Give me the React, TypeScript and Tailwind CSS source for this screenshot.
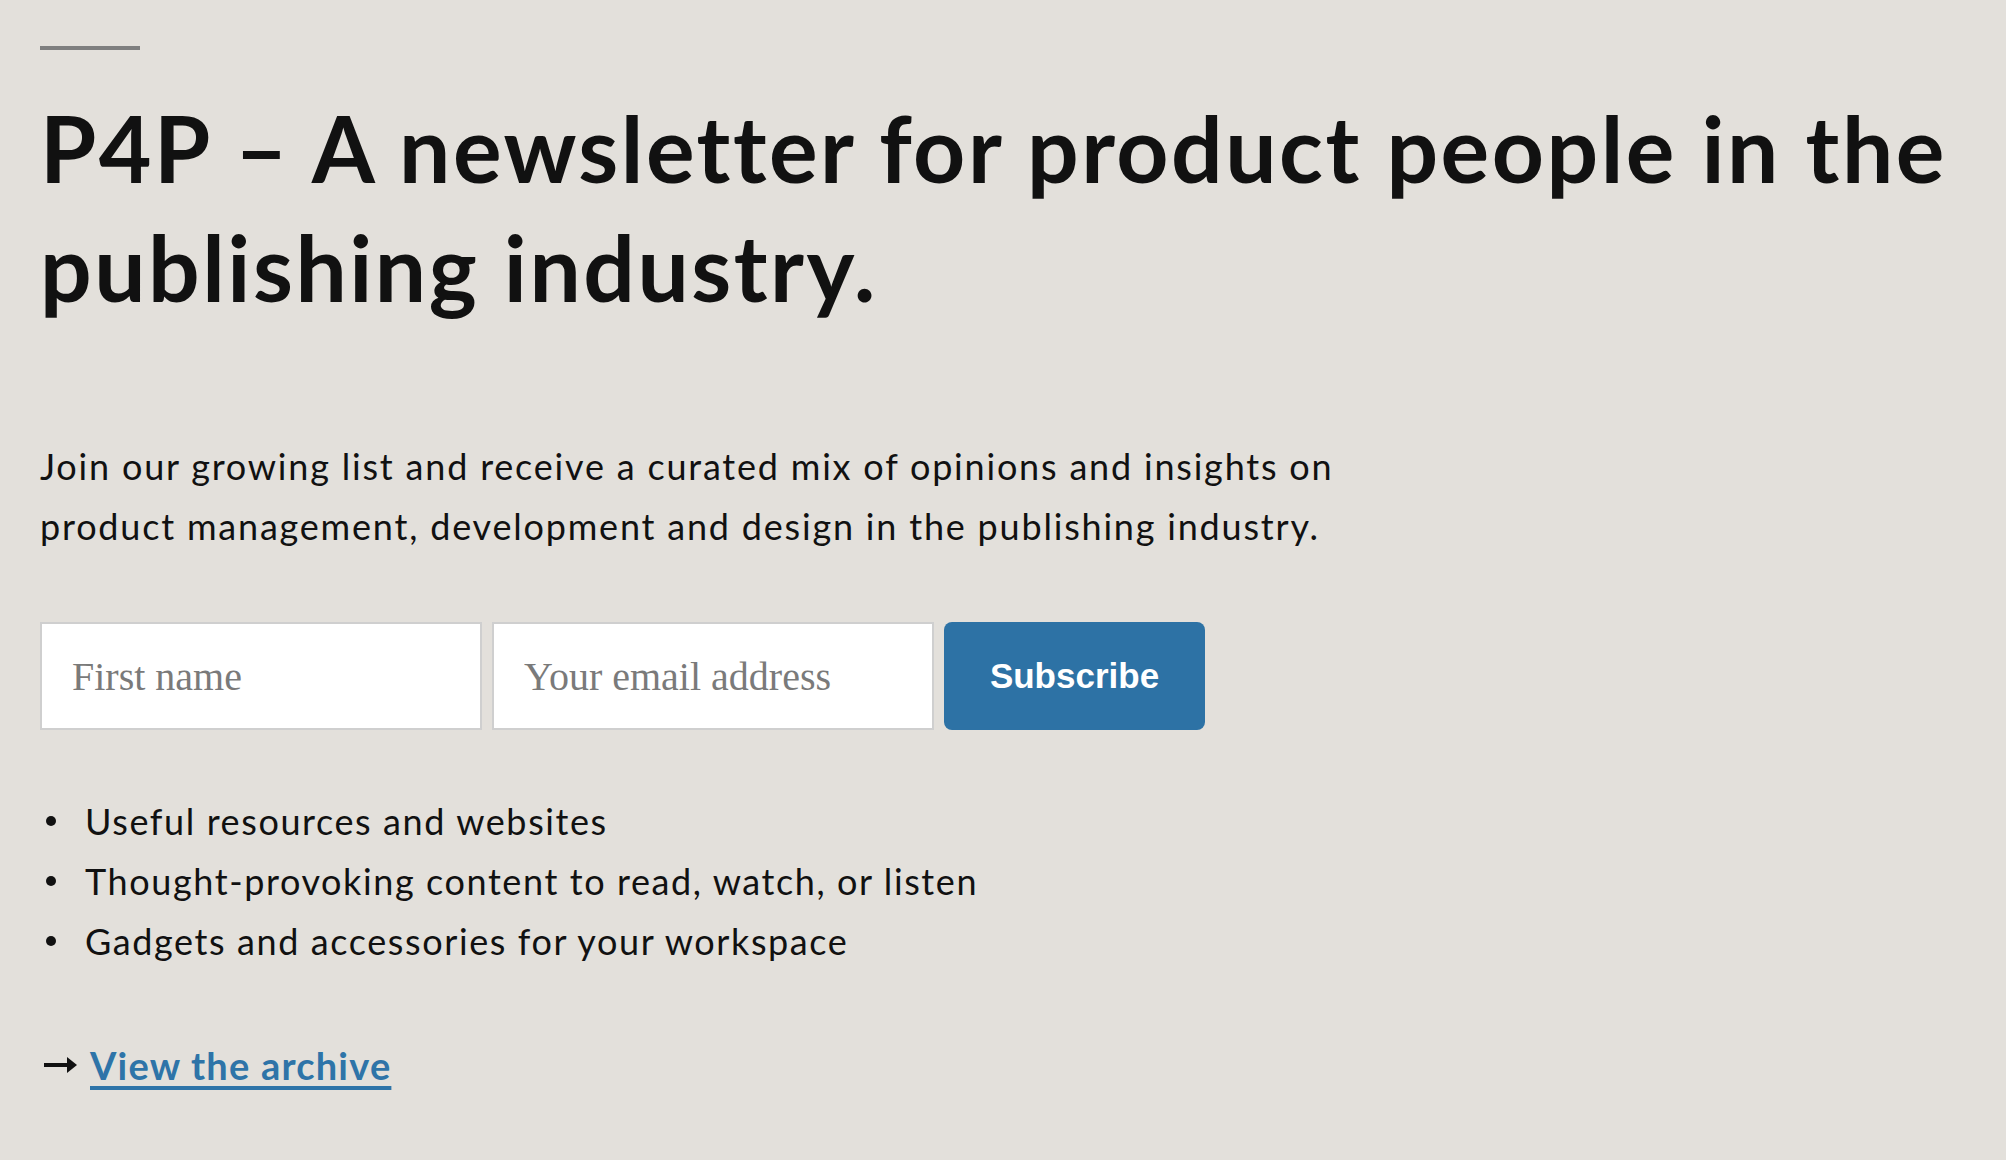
import React from "react";

export default function App() {
  const items = [
    "Useful resources and websites",
    "Thought-provoking content to read, watch, or listen",
    "Gadgets and accessories for your workspace",
  ];
  return (
    <div className="min-h-[1160px] w-full bg-[#e3e0db] px-[40px] pt-[46px] text-[#111111] font-['Lato',sans-serif]">
      <div className="h-[4px] w-[100px] bg-[#7f7f7f]" />
      <h1 className="mt-[38px] text-[91px] font-bold leading-[119px] tracking-[2.5px]">
        P4P – A newsletter for product people in the publishing industry.
      </h1>
      <p className="mt-[110px] max-w-[1340px] text-[36px] leading-[60px] tracking-[1.8px]">
        Join our growing list and receive a curated mix of opinions and insights on product management, development and design in the publishing industry.
      </p>
      <form className="mt-[66px] flex gap-[10px]" onSubmit={(e) => e.preventDefault()}>
        <input
          className="h-[108px] w-[442px] border-2 border-[#cfcfcf] bg-white px-[30px] font-['Liberation_Serif',serif] text-[40px] text-[#111] placeholder:text-[#7a7a7a] outline-none"
          placeholder="First name"
        />
        <input
          className="h-[108px] w-[442px] border-2 border-[#cfcfcf] bg-white px-[30px] font-['Liberation_Serif',serif] text-[40px] text-[#111] placeholder:text-[#7a7a7a] outline-none"
          placeholder="Your email address"
        />
        <button
          type="submit"
          className="h-[108px] w-[261px] rounded-[8px] bg-[#2d72a5] font-['Liberation_Sans',sans-serif] text-[35px] font-bold text-white"
        >
          Subscribe
        </button>
      </form>
      <ul className="mt-[61px]">
        {items.map((t) => (
          <li key={t} className="flex items-center text-[36px] leading-[60px] tracking-[1.6px]">
            <span className="ml-[6px] mr-[29px] h-[10px] w-[10px] rounded-full bg-[#111]" />
            <span>{t}</span>
          </li>
        ))}
      </ul>
      <div className="mt-[64px] flex items-center leading-[60px]">
        <svg width="34" height="16" viewBox="0 0 34 16" className="ml-[4px] mr-[12px]">
          <rect x="0" y="6" width="25" height="4" fill="#111" />
          <path d="M23 0 L33 8 L23 16 Z" fill="#111" />
        </svg>
        <a href="#" className="text-[38px] font-bold tracking-[1.2px] text-[#2e74a8] underline decoration-[4px] underline-offset-[6px]">
          View the archive
        </a>
      </div>
    </div>
  );
}
